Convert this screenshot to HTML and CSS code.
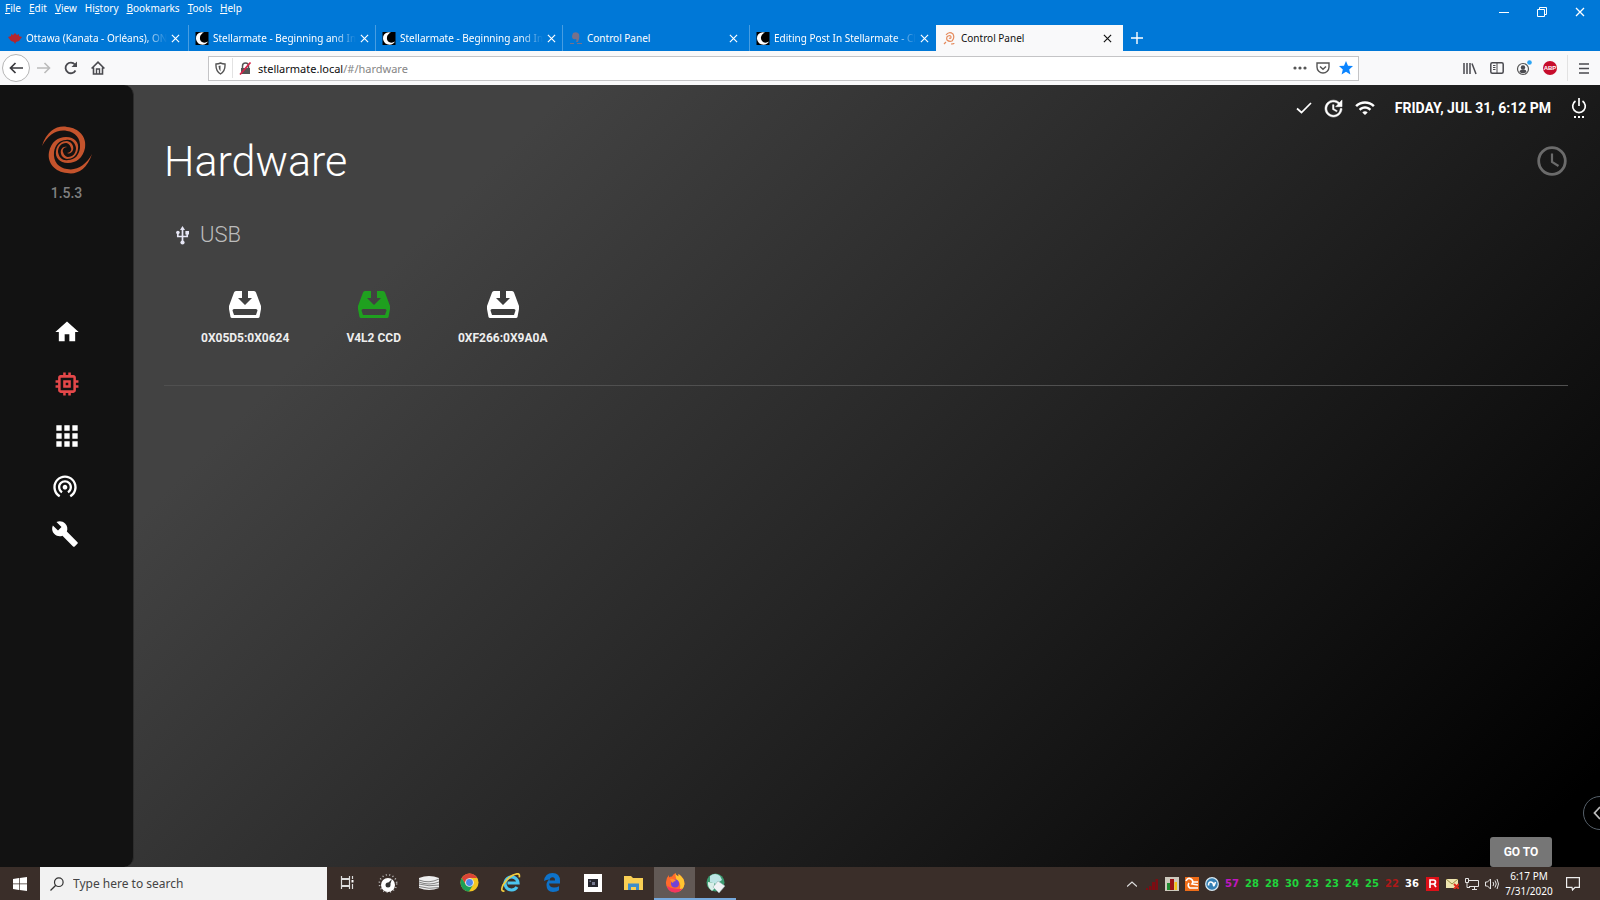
FILE: index.html
```html
<!DOCTYPE html>
<html lang="en">
<head>
<meta charset="utf-8">
<title>Control Panel</title>
<link rel="stylesheet" href="styles.css">
</head>
<body>
<svg class="defs" aria-hidden="true">
  <symbol id="x" viewBox="0 0 10 10"><path d="M1 1l8 8M9 1L1 9" fill="none" stroke="currentColor" stroke-width="1.3"/></symbol>
  <symbol id="moon" viewBox="0 0 13 13"><path d="M0 0h13v13H0z" fill="#000"/><path d="M6 .3Q0 1.500.5 7 1.500 12.700 7 12.700q4-.2 5.500-3.200-3 2-6 .5Q4 8.500 4.500 5 5 2 8.500.5z" fill="#fff"/></symbol>
  <symbol id="device" viewBox="0 0 32 27"><path fill="currentColor" fill-rule="evenodd" d="M7 0h6v7H9l7 7 7-7h-4V0h6q1.500 0 2 1.500l5 13.500v3l-1.500 8q-.3 1-1.500 1H3q-1.200 0-1.500-1L0 18v-3L5 1.500Q5.500 0 7 0zM5 18q-1.500 0-1.500 1.500L5 24h22l1.500-4.500Q28.500 18 27 18z"/></symbol>
  <symbol id="spiral" viewBox="0 0 52 52">
    <g id="arm"><path fill="currentColor" d="M1 22C6 6 17 1 26 3C38 4 46 13 44 24C42 34 35 39 27 39C18 39 14 33 15 27C16 20 21 17 26 17C31 18 33 22 32 26C31 29 28 30 26 29C29 29 31 26 30 24C29 20 26 19 25 19C20 19 17 23 17 28C18 34 22 37 27 36C34 36 38 31 39 24C40 14 34 8 26 7C16 5 7 11 1 22Z"/></g>
    <use href="#arm" transform="rotate(180 26 26)"/>
  </symbol>
</svg>

<header class="titlebar">
  <div class="menurow">
    <nav class="menu" aria-label="Menu bar">
      <button><u>F</u>ile</button><button><u>E</u>dit</button><button><u>V</u>iew</button><button>Hi<u>s</u>tory</button><button><u>B</u>ookmarks</button><button><u>T</u>ools</button><button><u>H</u>elp</button>
    </nav>
    <div class="winctl">
      <button aria-label="Minimize"><svg width="10" height="10" viewBox="0 0 10 10"><path d="M0 5.500h10" stroke="#fff"/></svg></button>
      <button aria-label="Restore"><svg width="10" height="10" viewBox="0 0 10 10"><path d="M.5 2.500h7v7h-7zM2.500 2.500v-2h7v7h-2" fill="none" stroke="#fff"/></svg></button>
      <button aria-label="Close"><svg width="10" height="10"><use href="#x"/></svg></button>
    </div>
  </div>
  <div class="tabs">
    <div class="tab"><svg width="14" height="13" viewBox="0 0 14 13"><path d="M7 1l2 2 2-1v2l3 1-3 4-3 1-1 2-1-2-3-1-3-4 3-1V2l2 1z" fill="#b3262f"/></svg><a href="#" class="label fade">Ottawa (Kanata - Orléans), ON</a><button aria-label="Close tab"><svg width="9" height="9"><use href="#x"/></svg></button></div>
    <div class="tab"><svg width="14" height="13"><use href="#moon"/></svg><a href="#" class="label fade">Stellarmate - Beginning and In</a><button aria-label="Close tab"><svg width="9" height="9"><use href="#x"/></svg></button></div>
    <div class="tab"><svg width="14" height="13"><use href="#moon"/></svg><a href="#" class="label fade">Stellarmate - Beginning and In</a><button aria-label="Close tab"><svg width="9" height="9"><use href="#x"/></svg></button></div>
    <div class="tab"><svg width="14" height="13" viewBox="0 0 14 13"><path d="M4 1q4-2 6 1 1 4-1 8H7q1-2 0-3Q3 8 3 4zM1 11h4v1H1zM8 11h5v1H8z" fill="#77718a"/></svg><a href="#" class="label">Control Panel</a><button aria-label="Close tab"><svg width="9" height="9"><use href="#x"/></svg></button></div>
    <div class="tab"><svg width="14" height="13"><use href="#moon"/></svg><a href="#" class="label fade">Editing Post In Stellarmate - Cl</a><button aria-label="Close tab"><svg width="9" height="9"><use href="#x"/></svg></button></div>
    <div class="tab active"><svg class="orange" width="14" height="13" viewBox="0 0 14 13"><path d="M3 3q3-4 7-1 2 4-1 7-3 1-5-1-1-3 1-4 3-1 3 1 0 2-2 1M1 12l2-2M8 12q3 0 3-1" fill="none" stroke="currentColor" stroke-width="1.2"/></svg><a href="#" class="label">Control Panel</a><button aria-label="Close tab"><svg width="9" height="9"><use href="#x"/></svg></button></div>
    <button class="newtab" aria-label="New tab"><svg width="12" height="12" viewBox="0 0 12 12"><path d="M6 0v12M0 6h12" stroke="#fff" stroke-width="1.4"/></svg></button>
  </div>
</header>

<div class="toolbar">
  <div class="navbtns">
    <button class="back" aria-label="Back"><svg width="14" height="12" viewBox="0 0 14 12"><path d="M14 6H1.500M6.500 1l-5 5 5 5" fill="none" stroke="#3a3a3e" stroke-width="1.700"/></svg></button>
    <button aria-label="Forward"><svg width="14" height="12" viewBox="0 0 14 12"><path d="M0 6h12.500M7.500 1l5 5-5 5" fill="none" stroke="#bbb" stroke-width="1.600"/></svg></button>
    <button aria-label="Reload"><svg width="14" height="14" viewBox="0 0 14 14"><path d="M11.500 9.500a5.300 5.300 0 1 1-.6-6" fill="none" stroke="#4a4a4f" stroke-width="1.800"/><path d="M13 .5v5.500H7.500z" fill="#4a4a4f"/></svg></button>
    <button aria-label="Home"><svg width="14" height="14" viewBox="0 0 14 14"><path d="M.6 7.500L7 1.200l6.400 6.300M2.500 6.500v6.500h9V6.500" fill="none" stroke="#4a4a4f" stroke-width="1.600"/><path d="M5.500 13V8h3v5" fill="none" stroke="#4a4a4f" stroke-width="1.400"/></svg></button>
  </div>
  <div class="urlbar">
    <svg width="11" height="13" viewBox="0 0 11 13"><path d="M1 2q2.500 0 4.500-1Q7.500 2 10 2q.5 7-4.500 10Q.5 9 1 2z" fill="none" stroke="#555" stroke-width="1.400"/><path d="M5.500 3.500v6Q3.500 7 3.500 4z" fill="#555"/></svg>
    <span class="vsep"></span>
    <svg width="13" height="13" viewBox="0 0 13 13"><path d="M2 6h9v6H2z" fill="#555"/><path d="M3.500 6V4a3 3 0 0 1 6 0v2" fill="none" stroke="#555" stroke-width="1.500"/><path d="M1 12.500L11.500.5" stroke="#d7264c" stroke-width="1.700"/></svg>
    <a class="url" href="#">stellarmate.local<span>/#/hardware</span></a>
    <div class="urlicons">
      <svg width="14" height="4" viewBox="0 0 14 4"><g fill="#555"><circle cx="2" cy="2" r="1.600"/><circle cx="7" cy="2" r="1.600"/><circle cx="12" cy="2" r="1.600"/></g></svg>
      <svg width="14" height="12" viewBox="0 0 14 12"><path d="M1 1h12v4a6 6 0 0 1-12 0z" fill="none" stroke="#555" stroke-width="1.400"/><path d="M4 4.500l3 2.800 3-2.800" fill="none" stroke="#555" stroke-width="1.500"/></svg>
      <svg width="14" height="14" viewBox="0 0 14 14"><path d="M7 0l2 4.700 5 .4-3.800 3.300L11.400 13.500 7 10.700l-4.400 2.800 1.200-5.100L0 5.100l5-.4z" fill="#0a84ff"/></svg>
    </div>
  </div>
  <div class="tools">
    <button aria-label="Library"><svg width="14" height="13" viewBox="0 0 14 13"><path d="M1 1v11M4 1v11M7 1v11M9 1.500L13 12" stroke="#4a4a4f" stroke-width="1.500"/></svg></button>
    <button aria-label="Sidebars"><svg width="14" height="12" viewBox="0 0 14 12"><rect x=".8" y=".8" width="12.400" height="10.400" rx="1.500" fill="none" stroke="#4a4a4f" stroke-width="1.500"/><path d="M7 1v10M3 3.500h2.500M3 5.500h2.500M3 7.500h2.500" stroke="#4a4a4f"/></svg></button>
    <button aria-label="Account"><svg width="16" height="16" viewBox="0 0 16 16"><circle cx="7" cy="9" r="5.500" fill="none" stroke="#555" stroke-width="1.200"/><circle cx="7" cy="7.500" r="2.200" fill="#4a4a4f"/><path d="M3.500 12q0-2.500 3.500-2.500t3.500 2.500q-3.500 2.500-7 0" fill="#4a4a4f"/><circle cx="13.500" cy="2.500" r="2.300" fill="#2ca5f5"/></svg></button>
    <button class="abp" aria-label="Adblock Plus">ABP</button>
    <span class="vsep tall"></span>
    <button aria-label="Menu"><svg width="10" height="11" viewBox="0 0 10 11"><path d="M0 1h10M0 5.500h10M0 10h10" stroke="#4a4a4f" stroke-width="1.500"/></svg></button>
  </div>
</div>

<div class="app">
  <aside class="sidebar">
    <svg class="logo" width="52" height="52"><use href="#spiral"/></svg>
    <div class="version">1.5.3</div>
    <nav class="side">
      <a href="#" aria-label="Home"><svg width="28" height="28" viewBox="0 0 24 24"><path d="M10 20v-6h4v6h5v-8h3L12 3 2 12h3v8z" fill="currentColor"/></svg></a>
      <a href="#" class="on" aria-label="Hardware"><svg width="28" height="28" viewBox="1 1 22 22"><path fill="currentColor" d="M15 9H9v6h6V9zm-2 4h-2v-2h2v2zm8-2V9h-2V7c0-1.100-.9-2-2-2h-2V3h-2v2h-2V3H9v2H7c-1.100 0-2 .9-2 2v2H3v2h2v2H3v2h2v2c0 1.100.9 2 2 2h2v2h2v-2h2v2h2v-2h2c1.100 0 2-.9 2-2v-2h2v-2h-2v-2h2zm-4 6H7V7h10v10z"/></svg></a>
      <a href="#" aria-label="Applications"><svg width="28" height="28" viewBox="1.500 1.500 21 21"><path fill="currentColor" d="M4 8h4V4H4v4zm6 12h4v-4h-4v4zm-6 0h4v-4H4v4zm0-6h4v-4H4v4zm6 0h4v-4h-4v4zm6-10v4h4V4h-4zm-6 4h4V4h-4v4zm6 6h4v-4h-4v4zm0 6h4v-4h-4v4z"/></svg></a>
    </nav>
    <nav class="side lower">
      <a href="#" aria-label="Network"><svg width="28" height="28" viewBox="0 0 24 24"><path fill="currentColor" d="M12 11c-1.100 0-2 .9-2 2s.9 2 2 2 2-.9 2-2-.9-2-2-2zm6 2c0-3.310-2.690-6-6-6s-6 2.690-6 6c0 2.220 1.210 4.150 3 5.190l1-1.740c-1.190-.7-2-1.970-2-3.450 0-2.210 1.790-4 4-4s4 1.790 4 4c0 1.480-.81 2.750-2 3.450l1 1.740c1.790-1.040 3-2.970 3-5.190zM12 3C6.480 3 2 7.480 2 13c0 3.700 2.010 6.920 4.990 8.650l1-1.730C5.610 18.530 4 15.960 4 13c0-4.420 3.580-8 8-8s8 3.580 8 8c0 2.960-1.610 5.530-4 6.920l1 1.730c2.990-1.730 5-4.950 5-8.650 0-5.520-4.480-10-10-10z"/></svg></a>
      <a href="#" aria-label="Tools"><svg width="28" height="28" viewBox="0 0 24 24"><path fill="currentColor" d="M22.700 19l-9.100-9.100c.9-2.300.4-5-1.500-6.900-2-2-5-2.400-7.400-1.300L9 6 6 9 1.600 4.700C.4 7.100.9 10.100 2.900 12.100c1.900 1.900 4.600 2.400 6.900 1.500l9.100 9.100c.4.4 1 .4 1.400 0l2.300-2.300c.5-.4.5-1.100.1-1.400z"/></svg></a>
    </nav>
  </aside>
  <main class="main">
    <div class="status">
      <svg width="16" height="12" viewBox="0 0 16 12"><path d="M1 6.500l4.500 4L15 1" fill="none" stroke="#fff" stroke-width="1.700"/></svg>
      <svg width="19" height="19" viewBox="2 2 20 20"><path fill="#fff" stroke="#fff" stroke-width=".5" d="M21 10.120h-6.780l2.740-2.820c-2.730-2.700-7.150-2.800-9.880-.1-2.730 2.710-2.730 7.080 0 9.790s7.150 2.710 9.880 0C18.320 15.650 19 14.080 19 12.100h2c0 1.980-.88 4.550-2.640 6.290-3.510 3.480-9.210 3.480-12.720 0-3.500-3.470-3.530-9.110-.02-12.580s9.140-3.470 12.650 0L21 3v7.120zM12.500 8v4.250l3.500 2.080-.72 1.210L11 13V8h1.500z"/></svg>
      <svg width="20" height="16" viewBox="1 3 22 18"><path fill="#fff" d="M1 9l2 2c4.970-4.970 13.030-4.970 18 0l2-2C16.930 2.930 7.080 2.930 1 9zm8 8l3 3 3-3c-1.650-1.660-4.340-1.660-6 0zm-4-4l2 2c2.760-2.760 7.240-2.760 10 0l2-2C15.140 9.140 8.870 9.140 5 13z"/></svg>
      <time class="date">FRIDAY, JUL 31, 6:12 PM</time>
      <button aria-label="Power"><svg width="16" height="22" viewBox="0 0 16 22"><path d="M8 1v8M4.500 4a6.300 6.300 0 1 0 7 0" fill="none" stroke="#fff" stroke-width="1.700"/><path d="M3 19h2v2H3zM7 19h2v2H7zM11 19h2v2h-2z" fill="#fff"/></svg></button>
    </div>
    <div class="heading">
      <h1>Hardware</h1>
      <button aria-label="History"><svg width="30" height="30" viewBox="0 0 30 30"><circle cx="15" cy="15" r="13.300" fill="none" stroke="#6b6b6b" stroke-width="2.800"/><path d="M15 7.500V16l6.500 4" fill="none" stroke="#6b6b6b" stroke-width="2.200"/></svg></button>
    </div>
    <section class="usb">
      <h2><svg width="13" height="19" viewBox="0 0 13 19"><path d="M6.500 3v13M1.800 7v3.500h9.400V7" fill="none" stroke="#e6e6f5" stroke-width="1.700"/><path d="M4 4l2.500-4L9 4z" fill="#e6e6f5"/><circle cx="6.500" cy="16.500" r="2.100" fill="#e6e6f5"/><circle cx="1.900" cy="6.500" r="1.800" fill="#e6e6f5"/><path d="M9.400 5H13v3.500H9.400z" fill="#e6e6f5"/></svg>USB</h2>
      <div class="devices">
        <button><svg width="32" height="27"><use href="#device"/></svg><span>0X05D5:0X0624</span></button>
        <button><svg class="green" width="32" height="27"><use href="#device"/></svg><span>V4L2 CCD</span></button>
        <button><svg width="32" height="27"><use href="#device"/></svg><span>0XF266:0X9A0A</span></button>
      </div>
    </section>
  </main>
  <button class="drawer" aria-label="Open panel"><svg width="8" height="14" viewBox="0 0 8 14"><path d="M7 1L1.500 7 7 13" fill="none" stroke="#bbb" stroke-width="1.800"/></svg></button>
  <button class="goto">GO TO</button>
</div>

<footer class="taskbar">
  <button class="start" aria-label="Start"><svg width="14" height="14" viewBox="0 0 14 14"><path d="M0 2l6-1v5.600H0zM6.700.9L14 0v6.600H6.700zM0 7.300h6V13l-6-1zM6.700 7.300H14V14l-7.300-1z" fill="#fff"/></svg></button>
  <label class="search"><svg width="14" height="14" viewBox="0 0 14 14"><circle cx="8.800" cy="5.200" r="4.300" fill="none" stroke="#333" stroke-width="1.200"/><path d="M5.800 8.300L.5 13.500" stroke="#333" stroke-width="1.300"/></svg><input type="text" placeholder="Type here to search" aria-label="Search"></label>
  <div class="apps">
    <button class="first" aria-label="Task view"><svg width="14" height="13" viewBox="0 0 14 13"><path d="M1.500 3.500h8v6h-8zM1.500 0v2.500h8V0M1.500 13v-2.500h8V13M12.500 0v3M12.500 8v5" fill="none" stroke="#ddd" stroke-width="1.200"/><path d="M11.500 4h2v2.500h-2z" fill="#fff"/></svg></button>
    <button aria-label="Gauge"><svg width="20" height="20" viewBox="0 0 20 20"><circle cx="10" cy="10.500" r="8.700" fill="none" stroke="#ccc" stroke-dasharray="1 2.500" stroke-width="1.500"/><circle cx="10" cy="12" r="7" fill="#fff"/><circle cx="10" cy="12" r="2.500" fill="#333"/><path d="M9 11l5-5-2 6z" fill="#333"/></svg></button>
    <button aria-label="Discs"><svg width="20" height="14" viewBox="0 0 20 14"><path d="M0 2q10-4 20 0v10q-10 4-20 0z" fill="#eee"/><path d="M0 4q10 4 20-1M0 6q10 4 20 0M0 8q10 3 20 1M0 10.500q10 3 20 1" fill="none" stroke="#555" stroke-width=".7"/></svg></button>
    <button aria-label="Chrome"><svg width="19" height="19" viewBox="0 0 20 20"><circle cx="10" cy="10" r="9.500" fill="#f3c623"/><path d="M1.800 5.200A9.500 9.500 0 0 1 18.200 5.200H10L6 12z" fill="#db4437"/><path d="M1.800 5.200A9.500 9.500 0 0 0 9.500 19.500L14 12H6z" fill="#1c9f57"/><circle cx="10" cy="10" r="4.600" fill="#eee"/><circle cx="10" cy="10" r="3.600" fill="#4d88ec"/></svg></button>
    <button aria-label="Internet Explorer"><svg width="20" height="20" viewBox="0 0 20 20"><path d="M16 14a6.500 6.500 0 1 1 1-4H6.500" fill="none" stroke="#4cc5ee" stroke-width="3.200"/><path d="M3.500 18Q-1 19 2 12 8 2 16 .8q3-.3 2.300 3.500" fill="none" stroke="#f2cb3d" stroke-width="1.700"/></svg></button>
    <button aria-label="Edge"><svg width="18" height="19" viewBox="0 0 18 19"><path d="M1 8Q2 0 9.500 0 17 0 17 8v2.500H6q.3 4 5 4 3 0 5-1.300v4Q14 19 10 19q-6.500 0-6.500-7 0-3.500 3-5.500Q3 6.500 1 8zm5.500-.5H12Q12 4.300 9.500 4.300T6.500 7.500z" fill="#0e72c9"/></svg></button>
    <button aria-label="Terminal"><svg width="18" height="18" viewBox="0 0 18 18"><path d="M0 0h18v18H0z" fill="#fff"/><path d="M4 5h10v8H4z" fill="#26262e"/><path d="M5.500 6.500h1.500v1.500H5.500zM8 8h3v3H8z" fill="#777a90"/></svg></button>
    <button aria-label="Files"><svg width="19" height="16" viewBox="0 0 19 16"><path d="M0 1h7l2 2h10v12H0z" fill="#f9cf54"/><path d="M4 15V8.500h11V15h-3v-3H7v3z" fill="#3d8ecb"/></svg></button>
    <button class="current" aria-label="Firefox"><svg width="20" height="20" viewBox="0 0 20 20"><path d="M1 9Q1 5 4 2v2.500q1-1 3-1Q8 1 10.500 0q0 2 3 3.500V1q6 4 6 10a9.300 9.300 0 0 1-18.500-2z" fill="#ff6a2b"/><path d="M10.500 0q0 2 3 3.500V1q6 4 6 10-1 6-6 7.500 3-4 1-9Q10 7 10.500 0z" fill="#ffc531"/><path d="M2 13q1 6 8 6.500 5 0 7.500-4-8 2-15.500-2.500z" fill="#f43660"/><circle cx="10" cy="10.500" r="4" fill="#7143d6"/><path d="M5 6q4-1 6 2-3 0-3 2-2-1-3-4z" fill="#ff8d2e"/></svg></button>
    <button class="open" aria-label="Viewer"><svg width="20" height="20" viewBox="0 0 20 20"><circle cx="9.500" cy="9.500" r="9" fill="#3c9b71"/><path d="M4 3q5-4 10 0l2 4-6 4-6-2z" fill="#bde5e5"/><path d="M2 9l6 1 1 5-3 3Q1 14 2 9z" fill="#d9efe9"/><path d="M12 8l7 5-6 7-6-6z" fill="#f1f3f5" stroke="#8aa" stroke-width=".5"/></svg></button>
  </div>
  <div class="tray">
    <span><svg width="10" height="6" viewBox="0 0 10 6"><path d="M0 5.500l5-4.500 5 4.500" fill="none" stroke="#ddd" stroke-width="1.300"/></svg></span>
    <span><svg width="12" height="12" viewBox="0 0 12 12"><path d="M0 10h2v2H0zM3 8h2.500v4H3zM6 4h3v8H6zM9.500 1H12v11H9.500z" fill="#7c0d12"/></svg></span>
    <span><svg width="14" height="14" viewBox="0 0 14 14"><path d="M0 0h14v14H0z" fill="#cdc9bd"/><path d="M2 6h3v7H2z" fill="#218c32"/><path d="M5 2h4v11H5z" fill="#9b1515"/><path d="M9.500 5H12v8H9.500z" fill="#f5c211"/></svg></span>
    <span><svg width="14" height="14" viewBox="0 0 14 14"><path d="M0 0h14v14H0z" fill="#ee6c18"/><path d="M1 4q2-4 5-2t1 5l6 1M4 6q-2 3 1 5h8M8 5h5" fill="none" stroke="#fff" stroke-width="1.600"/></svg></span>
    <span><svg width="14" height="14" viewBox="0 0 14 14"><circle cx="7" cy="7" r="6.300" fill="#3580b4" stroke="#d8e8f2" stroke-width="1.200"/><path d="M3.500 8.500q0-4 2.500-3.500t2.500 3 2-3" fill="none" stroke="#fff" stroke-width="1.600"/></svg></span>
    <span class="n purple">57</span><span class="n">28</span><span class="n">28</span><span class="n">30</span><span class="n">23</span><span class="n">23</span><span class="n">24</span><span class="n">25</span><span class="n red">22</span><span class="n white">36</span>
    <span><svg width="13" height="14" viewBox="0 0 13 14"><path d="M0 0h13v14H0z" fill="#dd1018"/><path d="M4 11V3h3.500a2 2 0 0 1 0 4H4M8 7l2 3" fill="none" stroke="#fff" stroke-width="1.700"/></svg></span>
    <span><svg width="13" height="10" viewBox="0 0 13 10"><path d="M0 0h12v9H0z" fill="#eee5b0"/><path d="M0 0l6 5 6-5" fill="none" stroke="#9a8b42"/><path d="M8 5l5 5M13 5L8 10" stroke="#dc2a1c" stroke-width="2"/></svg></span>
    <span><svg width="14" height="12" viewBox="0 0 14 12"><path d="M4 2.500h9.500v6H4M7 11.500h5M9.500 9v2.500M.5.500h3v4h-3zM2 4.500v5h3" fill="none" stroke="#e5e5e5"/></svg></span>
    <span><svg width="14" height="12" viewBox="0 0 14 12"><path d="M.5 4h2l3-3v10l-3-3h-2zM8 4q1.500 2 0 4M10 2.500q2.500 3.500 0 7M12 1q3 5 0 10" fill="none" stroke="#e5e5e5"/></svg></span>
    <time class="clock">6:17 PM<br>7/31/2020</time>
    <button class="notif" aria-label="Notifications"><svg width="14" height="14" viewBox="0 0 14 14"><path d="M.6.6h12.800v9.800H9L6.500 13 6 10.400H.6z" fill="none" stroke="#eee" stroke-width="1.200"/></svg></button>
  </div>
</footer>
</body>
</html>
```
FILE: styles.css
```css
* { box-sizing: border-box; }
html, body { height: 100%; }
body {
  margin: 0;
  display: flex;
  flex-direction: column;
  overflow: hidden;
  font-family: "Noto Sans", "Open Sans", sans-serif;
  font-size: 11px;
}
button {
  display: flex;
  align-items: center;
  justify-content: center;
  padding: 0;
  border: 0;
  background: none;
  color: inherit;
  font: inherit;
}
a { color: inherit; text-decoration: none; }
svg { flex: none; display: block; }
.defs { position: absolute; width: 0; height: 0; }

/* Browser chrome */
.titlebar { background: #0078d7; color: #fff; }
.menurow { display: flex; justify-content: space-between; height: 25px; }
.menu { display: flex; align-items: flex-start; gap: 8px; padding: 1px 5px; font-size: 10px; line-height: 14px; }
.menu button { display: block; }
.winctl { display: flex; height: 23px; padding-right: 1px; }
.winctl button { width: 38px; }
.tabs { display: flex; height: 26px; padding-left: 1px; }
.tab {
  flex: 0 1 187px;
  min-width: 0;
  display: flex;
  align-items: center;
  padding: 0 9px 0 6px;
  gap: 4px;
  border-left: 1px solid #479de2;
}
.tab:first-child { border-color: transparent; }
.label { flex: 1; font-size: 10px; line-height: 20px; white-space: nowrap; }
.fade {
  -webkit-mask-image: linear-gradient(to right, #000 84%, transparent);
  mask-image: linear-gradient(to right, #000 84%, transparent);
}
.tab button { width: 14px; height: 20px; }
.tab.active { background: #f9f9fa; border-color: #f9f9fa; color: #111; }
.orange { color: #e58a5c; }
.newtab { width: 28px; }

.toolbar {
  display: flex;
  align-items: center;
  height: 34px;
  background: #f9f9fa;
}
.navbtns { display: flex; align-items: center; width: 208px; padding-left: 2px; }
.navbtns button { width: 27px; height: 28px; }
.navbtns .back { width: 28px; border: 1px solid #b5b5b5; border-radius: 50%; background: #fff; }
.urlbar {
  flex: 1;
  display: flex;
  align-items: center;
  gap: 6px;
  height: 25px;
  padding: 0 5px 0 6px;
  border: 1px solid #c4c4c6;
  background: #fff;
}
.vsep { width: 1px; height: 20px; background: #e2e2e2; }
.vsep.tall { height: 26px; margin: 0 2px; }
.url { flex: 1; color: #0c0c0d; }
.url span { color: #858585; }
.urlicons { display: flex; align-items: center; gap: 9px; }
.tools { display: flex; align-items: center; justify-content: flex-end; width: 241px; padding-right: 3px; }
.tools button { width: 27px; height: 26px; }
.tools .abp {
  width: 14px;
  height: 14px;
  margin: 0 8px 0 6px;
  border-radius: 50%;
  background: #c70d2c;
  color: #fff;
  font: bold 6px "Liberation Sans", sans-serif;
}

/* Application */
.app {
  flex: 1;
  min-height: 0;
  display: flex;
  position: relative;
  overflow: hidden;
  background: linear-gradient(135deg, #424242 24%, #000 96%);
  color: #fff;
  font-family: Roboto, sans-serif;
}
.sidebar {
  width: 134px;
  flex: none;
  display: flex;
  flex-direction: column;
  align-items: center;
  padding-top: 39px;
  border-radius: 0 10px 10px 0;
  border-right: 1px solid #2c2c2c;
  background: #121212;
}
.logo { color: #c4532c; }
.version { margin-top: 8px; color: #808080; font-size: 14px; font-weight: 500; line-height: 18px; }
.side { display: flex; flex-direction: column; gap: 24px; padding-top: 116px; }
.side.lower { gap: 20px; padding: 22px 4px 0 0; }
.side .on { color: #e5484a; }
.main { flex: 1; min-width: 0; padding: 0 32px 0 30px; }
.status { display: flex; align-items: center; justify-content: flex-end; gap: 12px; height: 46px; margin-right: -19px; }
.date { margin: 0 8px; font-size: 14px; font-weight: 700; }
.heading { display: flex; align-items: center; justify-content: space-between; height: 60px; padding-right: 1px; }
h1 { margin: 0; font-size: 43px; font-weight: 300; line-height: 60px; }
.usb { padding-bottom: 39px; border-bottom: 1px solid #505050; }
h2 {
  display: flex;
  align-items: center;
  gap: 11px;
  margin: 0;
  padding: 31px 0 0 12px;
  color: #bcbcbc;
  font-size: 22px;
  font-weight: 300;
  line-height: 26px;
}
.devices { display: flex; gap: 57px; padding: 43px 0 0 37px; }
.devices button { flex-direction: column; gap: 12px; }
.devices span { font-size: 12px; font-weight: 700; line-height: 16px; color: #eee; }
.green { color: #1fa01f; }
.goto {
  position: absolute;
  right: 48px;
  bottom: 0;
  width: 62px;
  height: 30px;
  border-radius: 3px;
  background: #767676;
  font-size: 12px;
  font-weight: 700;
}
.drawer {
  position: absolute;
  right: -17px;
  bottom: 37px;
  width: 34px;
  height: 34px;
  padding-right: 7px;
  border: 1px solid #56606a;
  border-radius: 50%;
  background: #000;
}

/* Desktop taskbar */
.taskbar { display: flex; height: 33px; background: #3a2e29; color: #fff; }
.start { width: 40px; }
.search {
  width: 287px;
  display: flex;
  align-items: center;
  gap: 9px;
  padding-left: 10px;
  background: #f2f2f2;
}
.search input {
  flex: 1;
  min-width: 0;
  padding: 0;
  border: 0;
  background: none;
  font: 12px/18px "Noto Sans", "Open Sans", sans-serif;
}
.search input::placeholder { color: #444; opacity: 1; }
.apps { display: flex; }
.apps button { width: 41px; border-bottom: 2px solid transparent; }
.apps .first { width: 40px; }
.apps .current { background: #625955; border-color: #76a9dc; }
.apps .open { border-color: #76a9dc; }
.tray { flex: 1; display: flex; align-items: center; justify-content: flex-end; }
.tray > span { width: 20px; display: flex; justify-content: center; }
.n { color: #1fd43c; font: bold 10px "DejaVu Sans", sans-serif; }
.n.purple { color: #c316c3; }
.n.red { color: #b01818; }
.n.white { color: #fff; }
.clock { width: 54px; text-align: center; font-size: 10px; line-height: 15px; }
.notif { width: 34px; height: 33px; margin-right: 10px; }
```
